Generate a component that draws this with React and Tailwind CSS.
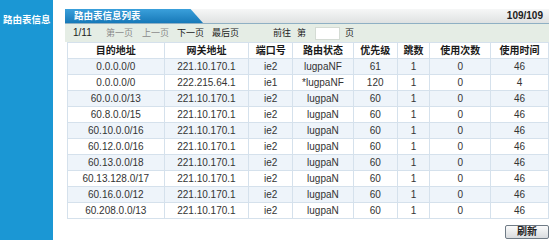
import React from "react";

const FONT = { fontFamily: '"Liberation Sans", Arial, "Noto Sans CJK SC", sans-serif' };

const COLUMNS = [
  { label: "目的地址", w: "w-[96px]" },
  { label: "网关地址", w: "w-[85px]" },
  { label: "端口号", w: "w-[44px]" },
  { label: "路由状态", w: "w-[61px]" },
  { label: "优先级", w: "w-[44px]" },
  { label: "跳数", w: "w-[33px]" },
  { label: "使用次数", w: "w-[61px]" },
  { label: "使用时间", w: "w-[58px]" },
];

const ROUTES = [
  ["0.0.0.0/0", "221.10.170.1", "ie2", "lugpaNF", "61", "1", "0", "46"],
  ["0.0.0.0/0", "222.215.64.1", "ie1", "*lugpaNF", "120", "1", "0", "4"],
  ["60.0.0.0/13", "221.10.170.1", "ie2", "lugpaN", "60", "1", "0", "46"],
  ["60.8.0.0/15", "221.10.170.1", "ie2", "lugpaN", "60", "1", "0", "46"],
  ["60.10.0.0/16", "221.10.170.1", "ie2", "lugpaN", "60", "1", "0", "46"],
  ["60.12.0.0/16", "221.10.170.1", "ie2", "lugpaN", "60", "1", "0", "46"],
  ["60.13.0.0/18", "221.10.170.1", "ie2", "lugpaN", "60", "1", "0", "46"],
  ["60.13.128.0/17", "221.10.170.1", "ie2", "lugpaN", "60", "1", "0", "46"],
  ["60.16.0.0/12", "221.10.170.1", "ie2", "lugpaN", "60", "1", "0", "46"],
  ["60.208.0.0/13", "221.10.170.1", "ie2", "lugpaN", "60", "1", "0", "46"],
];

function App() {
  return (
    <div className="flex w-[554px] h-[240px] bg-white overflow-hidden" style={FONT}>
      {/* Sidebar */}
      <aside className="w-[53px] shrink-0 bg-[#1b97d4] pl-[3px] pt-[6px]">
        <span className="text-[9.5px] font-bold text-white leading-none">路由表信息</span>
      </aside>

      {/* Panel */}
      <main className="ml-[12px] mt-[9px] w-[484px] flex flex-col">
        {/* Title bar */}
        <div className="flex h-[15px] bg-gradient-to-b from-[#f6f7f7] to-[#dfe2e2] border-b border-[#8fb0c4]">
          <div className="w-[138px] h-full pl-[9px] flex items-center bg-gradient-to-b from-[#3aa0db] to-[#1679b8] [clip-path:polygon(0_0,91%_0,100%_100%,0_100%)]">
            <span className="text-[9.5px] font-bold text-white leading-none">路由表信息列表</span>
          </div>
          <div className="flex-1 flex items-center justify-end pr-[6px]">
            <span className="text-[10px] font-bold text-[#222] leading-none">109/109</span>
          </div>
        </div>

        {/* Pager */}
        <div className="flex items-center h-[18px] bg-[#e5ede5] text-[9px] text-[#222] leading-none">
          <span className="ml-[8px] w-[33px] text-[10px]">1/11</span>
          <span className="w-[36px] text-[#8a8a8a]">第一页</span>
          <span className="w-[35px] text-[#8a8a8a]">上一页</span>
          <span className="w-[35px]">下一页</span>
          <span className="w-[61px]">最后页</span>
          <span className="w-[24px]">前往</span>
          <span className="w-[18px]">第</span>
          <span className="w-[25px] h-[13px] bg-white border border-[#d4dbd4]" />
          <span className="ml-[5px]">页</span>
        </div>

        {/* Table */}
        <div className="ml-[2px] border border-[#d5e1ec] text-[10px] leading-none">
          <div className="flex h-[15px] bg-white font-bold text-[#1a1a1a]">
            {COLUMNS.map((c, i) => (
              <div
                key={c.label}
                className={`${c.w} flex items-center justify-center ${i > 0 ? "border-l border-[#d5e1ec]" : ""}`}
              >
                {c.label}
              </div>
            ))}
          </div>
          {ROUTES.map((row, r) => (
            <div
              key={r}
              className={`flex h-[16px] border-t border-[#d5e1ec] text-[#333] ${r % 2 === 0 ? "bg-[#eef4fa]" : "bg-white"}`}
            >
              {row.map((cell, i) => (
                <div
                  key={i}
                  className={`${COLUMNS[i].w} flex items-center justify-center ${i > 0 ? "border-l border-[#d5e1ec]" : ""}`}
                >
                  {cell}
                </div>
              ))}
            </div>
          ))}
        </div>

        {/* Actions */}
        <div className="flex justify-end mt-[6px]">
          <button className="w-[44px] h-[14px] flex items-center justify-center rounded-[2px] border border-[#6f7b86] bg-gradient-to-b from-[#fbfbfb] to-[#d9dcdf] text-[10px] font-bold text-[#222] leading-none">
            刷新
          </button>
        </div>
      </main>
    </div>
  );
}

export default App;
